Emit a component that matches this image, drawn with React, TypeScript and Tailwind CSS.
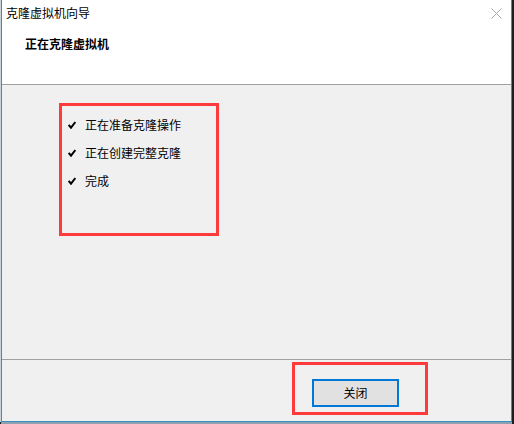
import React from 'react';

const FONT = '"Microsoft YaHei", "Noto Sans CJK SC", "Noto Sans", sans-serif';

const steps = ['正在准备克隆操作', '正在创建完整克隆', '完成'];

function Check() {
  return (
    <svg width="8" height="8" viewBox="0 0 8 8" className="shrink-0">
      <path d="M0.7 4 L3 6.7 L7.4 1" fill="none" stroke="#000" strokeWidth="2" />
    </svg>
  );
}

export default function App() {
  return (
    <div
      className="flex w-[514px] h-[424px] bg-[#1b1f24] text-[12px] text-black overflow-hidden"
      style={{ fontFamily: FONT }}
    >
      <div className="w-px h-[422px] bg-[#c9d3da]" />
      <div className="flex flex-col">
        <div className="flex flex-col w-[511px] h-[422px] border-l border-r border-b border-[#3a8fc2]">
          {/* header */}
          <div className="h-[84px] bg-white flex flex-col">
            <div className="h-[26px] flex items-center justify-between pl-[4px] pr-[9px]">
              <span className="leading-[16px]">克隆虚拟机向导</span>
              <svg width="11" height="11" viewBox="0 0 11 11">
                <path d="M0.5 0.5 L10.5 10.5 M10.5 0.5 L0.5 10.5" stroke="#a8a8a8" strokeWidth="1" />
              </svg>
            </div>
            <div className="mt-[10px] pl-[23px] font-bold leading-[16px]">正在克隆虚拟机</div>
          </div>
          <div className="h-px bg-[#a0a0a0]" />

          {/* body */}
          <div className="h-[274px] bg-[#f0f0f0] pt-[18px] pl-[57px]">
            <div className="w-[160px] h-[133px] border-[3px] border-[#ff3a3a] pt-[5px] pl-[6px]">
              {steps.map((s) => (
                <div key={s} className="h-[28px] flex items-center gap-[9px] leading-[16px]">
                  <Check />
                  <span>{s}</span>
                </div>
              ))}
            </div>
          </div>
          <div className="h-px bg-[#a0a0a0]" />

          {/* footer */}
          <div className="flex-1 bg-[#f0f0f0] pt-[2px] pl-[290px]">
            <div className="w-[136px] h-[53px] border-[3px] border-[#ff3a3a] pt-[14px] pl-[17px]">
              <button className="w-[87px] h-[28px] border-2 border-[#0078d7] bg-[#e1e1e1] flex items-center justify-center leading-[16px]">
                关闭
              </button>
            </div>
          </div>
        </div>
        <div className="h-[2px] bg-[#8fa0ae]" />
      </div>
    </div>
  );
}
